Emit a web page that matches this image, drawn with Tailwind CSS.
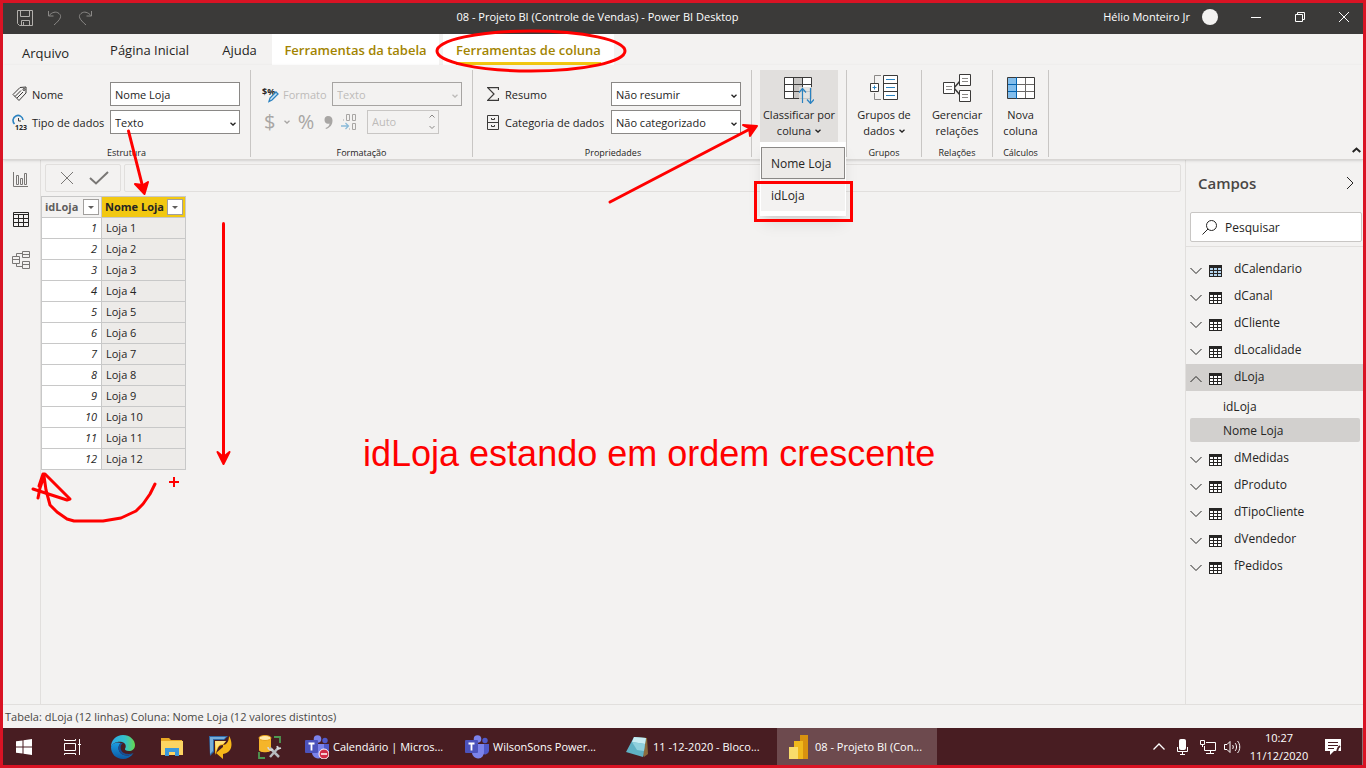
<!DOCTYPE html>
<html lang="pt-BR">
<head>
<meta charset="utf-8">
<title>08 - Projeto BI (Controle de Vendas) - Power BI Desktop</title>
<script src="https://cdn.jsdelivr.net/npm/@tailwindcss/browser@4"></script>
</head>
<body class="relative flex h-screen flex-col overflow-hidden border-3 border-[#d91324] bg-[#f3f2f1] font-['Open_Sans','Noto_Sans',sans-serif] text-[12px] leading-4 text-[#252423]">

<!-- Shared symbols -->
<svg class="hidden">
  <symbol id="chev" viewBox="0 0 6 4"><path d="M.5.7 3 3 5.5.7" fill="none" stroke="currentColor" stroke-width="1.3"/></symbol>
  <symbol id="tree-down" viewBox="0 0 12 8"><path d="M.5 1 6 6.5 11.500 1" fill="none" stroke="currentColor"/></symbol>
  <symbol id="tbl" viewBox="0 0 13 12"><rect width="13" height="12" fill="#252423"/><path d="M1 3h3v2H1zM5 3h3v2H5zM9 3h3v2H9zM1 6h3v2H1zM5 6h3v2H5zM9 6h3v2H9zM1 9h3v2H1zM5 9h3v2H5zM9 9h3v2H9z" fill="currentColor"/></symbol>
  <symbol id="teams" viewBox="0 0 24 24">
    <circle cx="20" cy="5.500" r="2.700" fill="#5059c9"/><circle cx="12.500" cy="4" r="3.800" fill="#7b83eb"/>
    <path d="M17 9h7v7a4 4 0 0 1-7 2z" fill="#5059c9"/><path d="M7 9h12v8a6 6 0 0 1-12 1z" fill="#7b83eb"/>
    <rect y="5" width="13" height="13" rx="1" fill="#4b53bc"/><path d="M3.500 8.500h6M6.500 8.500v7" stroke="#fff" stroke-width="1.800"/>
  </symbol>
</svg>

<header class="flex h-[31px] shrink-0 items-center bg-[#3b3a39] text-[11px] text-white">
  <div class="flex flex-1 items-center gap-3.5 pb-0.5 pl-3.5 text-[#8a8886]">
    <button aria-label="Salvar" class="text-[#b3b0ad]"><svg width="16" height="16" viewBox="0 0 16 16" fill="none" stroke="currentColor"><path d="M.5.5h15v15H2.500l-2-2zM3.500.5v6h9v-6M4.500 15.500v-5h8v5M6.500 12v3"/></svg></button>
    <button aria-label="Desfazer"><svg width="16" height="16" viewBox="0 0 16 16" fill="none" stroke="currentColor"><path d="M1.500 1v5h5M1.500 6C5 2 9 1 12 3.500S14 9 7 15"/></svg></button>
    <button aria-label="Refazer"><svg width="16" height="16" viewBox="0 0 16 16" fill="none" stroke="currentColor"><path d="M14.500 1v5h-5M14.500 6C11 2 7 1 4 3.500S2 9 9 15"/></svg></button>
  </div>
  <h1 class="pr-47 pb-1 whitespace-nowrap">08 - Projeto BI (Controle de Vendas) - Power BI Desktop</h1>
  <div class="-mr-[3px] flex flex-1 items-center justify-end pb-1">
    <span>Hélio Monteiro Jr</span>
    <span class="ml-3 size-4 rounded-full bg-[#f3f2f1]"></span>
    <button aria-label="Minimizar" class="ml-4 grid w-11 place-items-center"><svg width="10" height="10"><path d="M0 5.500h10" stroke="#fff"/></svg></button>
    <button aria-label="Restaurar" class="grid w-11 place-items-center"><svg width="10" height="10" fill="none" stroke="#fff"><path d="M.5 2.500h7v7h-7zM2.500 2.500v-2h7v7h-2"/></svg></button>
    <button aria-label="Fechar" class="grid w-11 place-items-center"><svg width="10" height="10" stroke="#fff"><path d="M0 0l10 10M10 0 0 10"/></svg></button>
  </div>
</header>

<nav class="flex h-[31px] shrink-0 text-[13px]">
  <button class="w-[89px] pt-1.5 pr-1">Arquivo</button>
  <button class="w-[115px]">Página Inicial</button>
  <button class="w-[65px]">Ajuda</button>
  <button class="w-[167px] bg-white font-semibold text-[#a28401]">Ferramentas da tabela</button>
  <button class="ml-1 flex w-[171px] flex-col items-center bg-white font-semibold text-[#a28401]"><span class="flex h-full items-center border-b-3 border-[#f2c811] pt-[3px]">Ferramentas de coluna</span></button>
</nav>

<section class="z-10 flex h-[95px] shrink-0 border-b border-[#d8d6d4] pt-[5px] pb-0.5 text-[11px] shadow-sm" aria-label="Faixa de opções">
  <div class="flex w-[248px] flex-col justify-between border-r border-[#c8c6c4] px-[9px] pt-3">
    <div class="flex flex-col gap-1">
      <div class="flex h-6 items-center">
        <svg class="mr-1 shrink-0" width="16" height="16" viewBox="0 0 16 16" fill="none" stroke="#3b3a39"><path d="M1 8.500 8 1.500l6-.5v6l-7 7.500zM3 10.500 9 4.500M5 12 11 6"/><circle cx="12" cy="3.500" r="1"/></svg>
        <label for="nome" class="w-[78px] pt-0.5">Nome</label>
        <input id="nome" value="Nome Loja" class="h-6 w-[130px] border border-[#8a8886] bg-white px-1">
      </div>
      <div class="flex h-6 items-center">
        <svg class="mr-1 shrink-0" width="16" height="17" viewBox="0 0 16 17" fill="none"><path d="M2.500 10A5 5 0 1 1 11 6" stroke="#2a82c0" stroke-width="1.600"/><path d="M6.500 4v3H9" stroke="#3b3a39"/><text x="3" y="16" font-size="7" font-weight="700" fill="#252423">123</text></svg>
        <label for="tipo" class="w-[78px] pt-0.5 whitespace-nowrap">Tipo de dados</label>
        <div class="relative"><select id="tipo" class="h-6 w-[130px] appearance-none border border-[#8a8886] bg-white px-1 pt-0.5"><option>Texto</option></select><svg class="pointer-events-none absolute top-3 right-1 h-1 w-1.5"><use href="#chev"/></svg></div>
      </div>
    </div>
    <h2 class="text-center text-[9px] leading-[8px]">Estrutura</h2>
  </div>

  <div class="flex w-[222px] flex-col justify-between border-r border-[#c8c6c4] pt-3 pl-[11px] text-[#bdbbb9]">
    <div class="flex flex-col gap-1">
      <div class="flex h-6 items-center">
        <svg class="mr-1 shrink-0" width="17" height="17" viewBox="0 0 17 17"><text x="0" y="9" font-size="9" font-weight="700" fill="#252423">$%</text><path d="m7 15.500 1-3.500 6-6 2 2-6 6z" fill="#cfe4f5" stroke="#2a82c0" stroke-width="1.300"/></svg>
        <label for="formato" class="w-[49px] pt-0.5">Formato</label>
        <div class="relative"><select id="formato" disabled class="h-6 w-[130px] appearance-none border border-[#a6a4a2] px-1 pt-0.5"><option>Texto</option></select><svg class="pointer-events-none absolute top-3 right-1 h-1 w-1.5"><use href="#chev"/></svg></div>
      </div>
      <div class="flex h-6 items-center text-[20px] leading-6 text-[#a8a6a4]">
        <button disabled aria-label="Moeda" class="w-[22px] pl-0.5 text-left">$</button>
        <svg class="h-1 w-1.5"><use href="#chev"/></svg>
        <button disabled aria-label="Porcentagem" class="w-7 pl-1">%</button>
        <button disabled aria-label="Separador de milhar" class="grid w-5 place-items-center"><svg width="9" height="13" viewBox="0 0 9 13"><path d="M4 0c3 0 4.500 2 4.500 4.500C8.500 9 6 11.500 2 13l-.5-1C4 11 5.500 9.500 5.500 7.500 3 8.500.5 7 .5 4S2 0 4 0" fill="#a8a6a4"/></svg></button>
        <button disabled aria-label="Casas decimais" class="w-5 pl-0.5"><svg width="18" height="18" viewBox="0 0 18 18" fill="none" stroke="#a8a6a4"><path d="M3.500 6.500v1M6.500 1.500h3v6h-3zM12.500 1.500h3v6h-3zM12.500 10.500h3v6h-3zM9.500 15.500v1"/><path d="M1 13h7M5.500 10 8.500 13l-3 3" stroke="#8bbbd9" stroke-width="1.300"/></svg></button>
        <div class="relative ml-[9px] flex text-[11px] text-[#bdbbb9]"><input aria-label="Número de casas" disabled value="Auto" class="h-6 w-[72px] border border-[#c8c6c4] px-1"><svg class="absolute top-1 right-1 h-4 w-1.5" viewBox="0 0 6 16" fill="none" stroke="#8a8886"><path d="M.5 3.500 3 1l2.500 2.500M.5 12 3 14.500 5.500 12"/></svg></div>
      </div>
    </div>
    <h2 class="pr-[11px] text-center text-[9px] leading-[8px] text-[#252423]">Formatação</h2>
  </div>

  <div class="flex w-[279px] flex-col justify-between border-r border-[#c8c6c4] pt-3 pl-3.5">
    <div class="flex flex-col gap-1">
      <div class="flex h-6 items-center">
        <svg class="mr-1.5 shrink-0" width="12" height="14" viewBox="0 0 12 14" fill="none" stroke="#3b3a39" stroke-width="1.200"><path d="M11.500 3V.7H.7L7 7 .7 13.300h10.800V11"/></svg>
        <label for="resumo" class="w-[106px] pt-0.5">Resumo</label>
        <div class="relative"><select id="resumo" class="h-6 w-[130px] appearance-none border border-[#8a8886] bg-white px-1 pt-0.5"><option>Não resumir</option></select><svg class="pointer-events-none absolute top-3 right-1 h-1 w-1.5"><use href="#chev"/></svg></div>
      </div>
      <div class="flex h-6 items-center">
        <svg class="mr-1.5 shrink-0" width="12" height="15" viewBox="0 0 12 15" fill="none" stroke="#3b3a39"><path d="M.5.5h11v14H.500zM.5 7.500h11M4.500 3v1.500h3V3M4.500 10v1.500h3V10"/></svg>
        <label for="categoria" class="w-[106px] pt-0.5 whitespace-nowrap">Categoria de dados</label>
        <div class="relative"><select id="categoria" class="h-6 w-[130px] appearance-none border border-[#8a8886] bg-white px-1 pt-0.5"><option>Não categorizado</option></select><svg class="pointer-events-none absolute top-3 right-1 h-1 w-1.5"><use href="#chev"/></svg></div>
      </div>
    </div>
    <h2 class="pr-3 text-center text-[9px] leading-[8px]">Propriedades</h2>
  </div>

  <div class="relative w-[95px] border-r border-[#c8c6c4] pl-2">
    <button class="flex h-[72px] w-[78px] flex-col items-center bg-[#e1dfdd] pt-[7px]">
      <svg class="mb-[3px]" width="30" height="27" viewBox="0 0 30 27" fill="none"><path d="M.5.500h27v21H.5z" fill="#fff"/><path d="M9.500.5h9v21h-9z" fill="#c8c6c4"/><path d="M.5.500h27v21H.5zM.5 7.500h27M.5 14.500h27M9.500.5v21M18.500.5v21" stroke="#3b3a39"/><path d="M15 10h14v16H15z" fill="#e1dfdd" fill-opacity=".85"/><path d="M18.500 26V12M15 15.500l3.500-4 3.500 4M26.500 11v15M23 22.500l3.500 4 3.500-4" stroke="#2a82c0" stroke-width="1.200"/></svg>
      <span class="whitespace-nowrap">Classificar por</span>
      <span class="flex items-center gap-1">coluna <svg class="h-1 w-1.5"><use href="#chev"/></svg></span>
    </button>
    <ul role="menu" class="absolute top-[72px] left-2 w-[86px] bg-white px-px pt-[5px] pb-[5px] text-[12px] shadow-lg">
      <li role="none"><button role="menuitem" class="h-8 w-full border border-[#8a8886] bg-[#edebe9] pt-0.5 pl-[9px] text-left">Nome Loja</button></li>
      <li role="none"><button role="menuitem" class="h-8 w-full bg-[#f3f2f1] pt-0.5 pl-2.5 text-left">idLoja</button></li>
    </ul>
  </div>

  <div class="flex w-[75px] flex-col justify-between border-r border-[#c8c6c4]">
    <button class="flex flex-col items-center pt-[5px]">
      <svg class="mb-[5px]" width="28" height="27" viewBox="0 0 28 27" fill="none"><path d="M11 .5H4.500V8M4.500 18v6.500H11" stroke="#8a8886"/><path d="M.5 8.500h8v8h-8z" fill="#fff" stroke="#3b3a39"/><path d="M4.500 10.500v4M2.500 12.500h4" stroke="#2a82c0"/><path d="M13.500.5h14v24h-14zM13.500 8.500h14M13.500 16.500h14" fill="#fff" stroke="#3b3a39"/><path d="M16 4.500h9M16 12.500h9M16 20.500h9" stroke="#2a82c0"/></svg>
      <span>Grupos de</span><span class="flex items-center gap-1">dados <svg class="h-1 w-1.5"><use href="#chev"/></svg></span>
    </button>
    <h2 class="text-center text-[9px] leading-[8px]">Grupos</h2>
  </div>
  <div class="flex w-[71px] flex-col justify-between border-r border-[#c8c6c4]">
    <button class="flex flex-col items-center pt-1">
      <svg class="mb-[5px]" width="28" height="28" viewBox="0 0 28 28"><path d="M11 14 17 7M11 14l6 7" stroke="#3b3a39" stroke-width="1.500"/><path d="M.5 8.500h11v11H.5zM16.500.5h11v11h-11zM16.500 16.500h11v11h-11z" fill="#fff" stroke="#3b3a39"/><path d="M3 12.500h6M3 15.500h6M19 4.500h6M19 7.500h6M19 20.500h6M19 23.500h6" stroke="#8a8886"/></svg>
      <span>Gerenciar</span><span>relações</span>
    </button>
    <h2 class="text-center text-[9px] leading-[8px]">Relações</h2>
  </div>
  <div class="flex w-14 flex-col justify-between border-r border-[#c8c6c4]">
    <button class="flex flex-col items-center pt-[7px]">
      <svg class="mb-2" width="28" height="22" viewBox="0 0 28 22" fill="none"><path d="M.5.5h27v21H.5z" fill="#fff"/><path d="M.5.5h9v21h-9z" fill="#83beec"/><path d="M9 7.500h19M9 14.500h19M18.500 0v22" stroke="#6b6967"/><path d="M.5.5h27v21H.5z" stroke="#3b3a39"/><path d="M1 7.500h8M1 14.500h8M9.500 0v22" stroke="#0063b1"/></svg>
      <span>Nova</span><span>coluna</span>
    </button>
    <h2 class="text-center text-[9px] leading-[8px]">Cálculos</h2>
  </div>
  <button aria-label="Recolher faixa" class="mt-auto mr-0.5 mb-1 ml-auto"><svg width="9" height="6" fill="none" stroke="#252423" stroke-width="2"><path d="M.7 5 4.500 1.500 8.300 5"/></svg></button>
</section>

<main class="flex min-h-0 flex-1">
  <nav aria-label="Exibições" class="flex w-[38px] shrink-0 flex-col items-center border-r border-[#e1dfdd] pt-3 pr-0.5 text-[#797775]">
    <button aria-label="Relatório"><svg width="15" height="15" viewBox="0 0 15 15" fill="none" stroke="currentColor"><path d="M.5 0v14.500H15M3.500 3.500h2v9h-2zM7.500 6.500h2v6h-2zM11.500 1.500h2v11h-2z"/></svg></button>
    <button aria-label="Dados" class="mt-[25px]"><svg width="16" height="15" viewBox="0 0 16 15" fill="none" stroke="#252423"><path d="M.5.5h15v14H.5zM.5 2.500h15M.5 6.500h15M.5 10.500h15M5.500 2.500v12M10.500 2.500v12"/></svg></button>
    <button aria-label="Modelo" class="mt-6"><svg width="18" height="18" viewBox="0 0 18 18" fill="none" stroke="currentColor"><path d="M.5 5.500h7v7h-7zM.5 8.500h7M10.500.5h7v6h-7zM10.500 3.500h7M10.500 10.500h7v7h-7zM10.500 13.500h7M4.500 5V2.500h6M4.500 13v2.500h6"/></svg></button>
  </nav>
  <div class="flex min-w-0 flex-1 flex-col">
    <div class="flex h-9 gap-[3px] py-1 pr-1 pl-1">
      <div class="flex w-[76px] items-center justify-center gap-4 rounded-xs border border-[#e1dfdd] pl-1 text-[#797775]">
        <button aria-label="Cancelar"><svg width="12" height="12" stroke="currentColor"><path d="M0 0l12 12M12 0 0 12"/></svg></button>
        <button aria-label="Confirmar"><svg width="20" height="14" fill="none" stroke="currentColor" stroke-width="2"><path d="m1 7 6 5.500L19 1"/></svg></button>
      </div>
      <input aria-label="Fórmula" class="min-w-0 flex-1 rounded-xs border border-[#e1dfdd]">
    </div>
    <table class="w-[145px] table-fixed border-collapse">
      <colgroup><col class="w-[60px]"><col></colgroup>
      <thead><tr class="h-[21px] text-[11px]">
        <th class="border border-[#c8c8c8] p-0 text-[#605e5c]"><div class="flex items-center justify-between pr-0.5 pl-[3px]">idLoja <button aria-label="Filtrar idLoja" class="grid size-4 place-items-center border border-[#a19f9d] bg-white"><svg width="6" height="3"><path d="M0 0h6L3 3z" fill="#605e5c"/></svg></button></div></th>
        <th class="border border-[#c8c8c8] bg-[#f2c811] p-0"><div class="flex items-center justify-between pr-0.5 pl-[3px]">Nome Loja <button aria-label="Filtrar Nome Loja" class="grid size-4 place-items-center border border-[#a19f9d] bg-white"><svg width="6" height="3"><path d="M0 0h6L3 3z" fill="#605e5c"/></svg></button></div></th>
      </tr></thead>
      <tbody id="rows" class="text-[11px]"></tbody>
    </table>
  </div>

  <aside class="flex w-[178px] shrink-0 flex-col border-l border-[#e1dfdd]">
    <div class="flex h-[52px] items-center justify-between pr-[9px] pb-1.5 pl-3">
      <h2 class="text-[15px] font-semibold text-[#484644]">Campos</h2>
      <button aria-label="Recolher painel"><svg width="8" height="14" fill="none" stroke="#252423"><path d="M1 1l6 6-6 6"/></svg></button>
    </div>
    <div class="border-b border-[#e1dfdd] pr-px pb-1 pl-1">
      <label class="flex h-[30px] items-center rounded-xs border border-[#c8c6c4] bg-white pl-[11px]">
        <svg class="shrink-0" width="15" height="15" fill="none" stroke="#252423"><circle cx="9.500" cy="5.500" r="5"/><path d="M6 9 .5 14.500"/></svg>
        <input aria-label="Pesquisar" placeholder="Pesquisar" class="ml-2 w-full min-w-0 pt-0.5 placeholder:text-[#252423]">
      </label>
    </div>
    <ul id="fields" class="pt-[9px]"></ul>
  </aside>
</main>

<footer class="flex h-6 shrink-0 items-center border-t border-[#e1dfdd] pl-0.5 text-[11px] text-[#484644]">Tabela: dLoja (12 linhas) Coluna: Nome Loja (12 valores distintos)</footer>

<div role="toolbar" aria-label="Barra de tarefas" class="flex h-[37px] shrink-0 items-center bg-[#481d22] text-[11px] text-white">
  <button aria-label="Iniciar" class="grid w-[46px] shrink-0 place-items-center pr-1"><svg width="16" height="16" fill="#fff"><path d="M0 2.300 6.500 1.400v6.100H0zM7.500 1.200 16 0v7.500H7.500zM0 8.500h6.500v6.100L0 13.700zM7.500 8.500H16V16l-8.500-1.200z"/></svg></button>
  <button aria-label="Visão de tarefas" class="grid w-[49px] shrink-0 place-items-center pr-0.5"><svg width="17" height="16" fill="none" stroke="#fff"><path d="M.5 0v1.500h11V0M.5 4.500h11v7H.5zM.5 16v-1.500h11V16M15.500 0v16M14 5.500h3" /></svg></button>
  <button aria-label="Edge" class="grid w-[49px] shrink-0 place-items-center"><svg width="24" height="24" viewBox="0 0 24 24"><defs><linearGradient id="eg"><stop stop-color="#2aa8e8"/><stop offset=".6" stop-color="#35c1c8"/><stop offset="1" stop-color="#66d84c"/></linearGradient><linearGradient id="eb" x2="0" y2="1"><stop stop-color="#1b9de2"/><stop offset="1" stop-color="#0c59a4"/></linearGradient></defs><path d="M0 12C0 5 5 0 12 0s12 5 12 10c0 4-3 6-6 6-3 0-4.500-1-4-2.200C15.500 12 15 8 11 7 6 6 1 8.500 0 12" fill="url(#eg)"/><path d="M0 12C1 8 6 6.500 10 8c-4 3-3 9 1.500 11.500 4 2 8 1 11-1.500C20 22 16 24 12 24 5 24 0 19 0 12" fill="url(#eb)"/><path d="M10 8c-4 3-3 9 1.500 11.500 4 2 8 1 11-1.500-5 2-12 1-12.800-4.500C9.500 11 10 9 12 8.500z" fill="#174f95"/></svg></button>
  <button aria-label="Explorador de Arquivos" class="grid w-[49px] shrink-0 place-items-center"><svg width="22" height="19" viewBox="0 0 22 19"><path d="M0 1h8l2 2h11v15H0z" fill="#e8a824"/><path d="M0 4h22v14H0z" fill="#fcd462"/><path d="M4 11h14v8h-4v-4H8v4H4z" fill="#3a98dc"/></svg></button>
  <button aria-label="Aplicativo de dados" class="grid w-[49px] shrink-0 place-items-center"><svg width="23" height="24" viewBox="0 0 23 24"><path d="M0 1h19l-4 4H5v12l-4 4z" fill="#2f6aa8"/><path d="M1 2h16l-2 2H4v12l-3 3z" fill="#77add8"/><path d="M6 6h11l-3 4c3 0 6-3 6-9 4 6 4 17-6 18v5l-7-6 7-6v-2c-3 0-4 1-5 3l-3 7z" fill="#f7b719"/><path d="M6 6h11l-3 3c-4 0-6 3-7 8z" fill="#ffe17b"/></svg></button>
  <button aria-label="Ferramentas de banco de dados" class="grid w-[49px] shrink-0 place-items-center"><svg width="24" height="24" viewBox="0 0 24 24" fill="none"><path d="M1 3v12c0 3 12 3 12 0V3z" fill="#f5b52a"/><ellipse cx="7" cy="3" rx="6" ry="2.500" fill="#ffe9a8" stroke="#e9a31b"/><path d="M16 2h6v6M1 17v6h6" stroke="#4e9a51" stroke-width="1.800"/><path d="m12 13 9 9M21 12l-9 10" stroke="#b6bbc0" stroke-width="2.500"/><path d="M10 12c0 3 3 4 5 2M19 11l1 3 3-1" stroke="#d8dadc" stroke-width="1.500"/></svg></button>
  <button class="flex h-full w-40 shrink-0 items-center pl-[11px]"><svg class="mr-1 shrink-0" width="24" height="24" viewBox="0 0 24 24"><use href="#teams"/><circle cx="19" cy="19" r="5" fill="#d12a45" stroke="#fff"/><path d="M16 19h6" stroke="#fff" stroke-width="1.500"/></svg>Calendário | Micros...</button>
  <button class="ml-px flex h-full w-40 shrink-0 items-center pl-2.5"><svg class="mr-1 shrink-0" width="24" height="24"><use href="#teams"/></svg>WilsonSons Power...</button>
  <button class="ml-px flex h-full w-40 shrink-0 items-center pl-2.5"><svg class="mr-1 shrink-0" width="23" height="22" viewBox="0 0 23 22"><path d="m8 1 13 1 1 16-4 3z" fill="#8b6b3c"/><path d="M8 1 20 2l-3 19-17-5z" fill="#5fb1c4"/><path d="m8 1 12 1-1 6L6 6z" fill="#c8ecf2"/><path d="m6 6 13 2-1 7-7-1z" fill="#8fd0dd"/></svg>11 -12-2020 - Bloco...</button>
  <button class="ml-px flex h-full w-40 shrink-0 items-center bg-[#6d4a4e] pl-3"><svg class="mr-[7px] shrink-0" width="19" height="24" viewBox="0 0 19 24"><path d="M11 0h8v24h-8z" fill="#d8920f"/><path d="M5 6h9v18H5z" fill="#f0b91c"/><path d="M0 12h9v12H0z" fill="#f8dc6a"/></svg>08 - Projeto BI (Con...</button>
  <div class="ml-auto flex h-full items-center border-r border-[#8d7174]">
    <button aria-label="Ícones ocultos"><svg width="12" height="7" fill="none" stroke="#fff" stroke-width="1.300"><path d="m.5 6.500 5.500-5.500 5.500 5.500"/></svg></button>
    <svg class="ml-3" width="11" height="16" fill="none" stroke="#fff"><rect x="2.500" y=".5" width="6" height="10" rx="1" fill="#fff"/><path d="M.5 8v4.500h10V8M5.500 12.500V15M3 15.500h5"/></svg>
    <svg class="ml-3" width="16" height="14" fill="none" stroke="#fff"><path d="M6 2.500h9.500v8H4.500V6M10.500 10.500v3M6 13.500h8M.5.5h4v4h-4zM2.500 4.500V7"/></svg>
    <svg class="ml-2" width="17" height="14" fill="none" stroke="#fff"><path d="M.5 4.500H3l3-3v11l-3-3H.500zM8.500 5c1 1 1 3 0 4M11 3c2 2 2 6 0 8M13.500 1c3 3 3 9 0 12"/></svg>
    <div class="ml-2 w-[60px] text-center leading-[18px]"><time>10:27</time><br><time>11/12/2020</time></div>
    <button aria-label="Notificações" class="mr-5 ml-4"><svg width="17" height="16" viewBox="0 0 17 16"><path d="M0 0h16v12H9l-4 4v-4H0z" fill="#fff"/><path d="M3 3.500h10M3 6.500h10M3 9.500h6" stroke="#481d22"/><path d="M15 7c-3 2-4 7 0 7" fill="none" stroke="#481d22" stroke-width="2"/></svg></button>
  </div>
</div>

<!-- Hand-drawn annotations laid over the window -->
<svg class="pointer-events-none absolute -top-[3px] -left-[3px] z-20" width="1366" height="768" viewBox="0 0 1366 768" fill="none" stroke="#f00" stroke-width="3" stroke-linecap="round" stroke-linejoin="round">
  <ellipse cx="531" cy="51" rx="94" ry="20"/>
  <path d="M128.500 131 143 188"/><path d="m135 184 9.500 10 3.500-12-5 3z" fill="#f00" stroke-width="2"/>
  <path d="M610 202 750 129"/><path d="m743 125 14 1-7 10-1-8z" fill="#f00" stroke-width="2"/>
  <path d="M223.500 223.500V460"/><path d="m217.500 452 6 12 6-12-6 5z" fill="#f00" stroke-width="2"/>
  <path d="m155 484-5 10-7 10-7 7-15 7-18 3H74l-7-2-10-7-7-7-4-15-2-14-4 12-2 10"/>
  <path d="m33 489 34 11 3-1-25-25h-2l-4 12"/>
  <path d="M170 482h8M174 478v8" stroke-width="2" stroke-linecap="square"/>
  <rect x="755.500" y="182.500" width="96" height="38" stroke-linejoin="miter"/>
</svg>
<p class="pointer-events-none absolute top-[431px] left-[360px] z-20 font-['Liberation_Sans',sans-serif] text-[36px] leading-[40px] whitespace-nowrap text-[#f00]">idLoja estando em ordem crescente</p>

<script>
  document.getElementById('rows').innerHTML = Array.from({length: 12}, (_, i) => `
    <tr class="h-[21px]"><td class="border border-[#c8c8c8] bg-white p-0 pr-1 text-right italic">${i + 1}</td><td class="border border-[#c8c8c8] bg-[#edebe9] p-0 pl-1">Loja ${i + 1}</td></tr>`).join('');

  const names = ['dCalendario', 'dCanal', 'dCliente', 'dLocalidade', 'dLoja', 'dMedidas', 'dProduto', 'dTipoCliente', 'dVendedor', 'fPedidos'];
  document.getElementById('fields').innerHTML = names.map(n => {
    const open = n === 'dLoja';
    return `<li><button aria-expanded="${open}" class="flex h-[27px] w-full items-center pl-1 text-left ${open ? 'bg-[#d2d0ce]' : ''}">
      <svg class="mt-0.5 h-2 w-3 ${open ? 'rotate-180' : ''}"><use href="#tree-down"/></svg>
      <svg class="mt-0.5 ml-[7px] ${n === 'dCalendario' ? 'text-[#b5d5ee]' : 'text-white'}" width="13" height="12"><use href="#tbl"/></svg>
      <span class="ml-3 pb-0.5">${n}</span></button>
      ${open ? `<ul class="py-[3px] pr-[3px] pl-1"><li><button class="h-6 w-full pt-0.5 pl-[33px] text-left">idLoja</button></li><li><button class="h-6 w-full rounded-xs bg-[#d2d0ce] pt-0.5 pl-[33px] text-left">Nome Loja</button></li></ul>` : ''}</li>`;
  }).join('');
</script>
</body>
</html>
